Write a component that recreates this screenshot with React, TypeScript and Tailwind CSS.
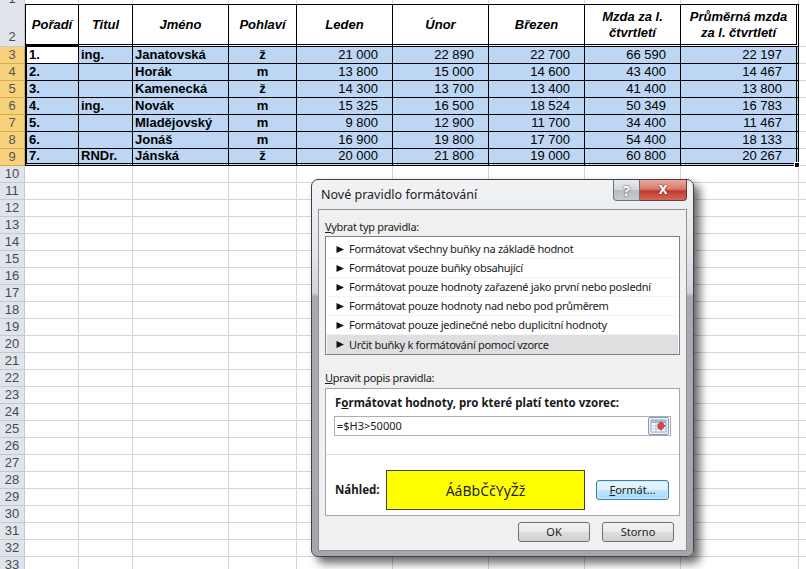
import React from 'react';

const COLS = [54, 54, 96, 68, 96, 96, 96, 96, 118];

const HEADERS: string[][] = [
  ['Pořadí'],
  ['Titul'],
  ['Jméno'],
  ['Pohlaví'],
  ['Leden'],
  ['Únor'],
  ['Březen'],
  ['Mzda za l.', 'čtvrtletí'],
  ['Průměrná mzda', 'za l. čtvrtletí'],
];

const DATA: string[][] = [
  ['1.', 'ing.', 'Janatovská', 'ž', '21 000', '22 890', '22 700', '66 590', '22 197'],
  ['2.', '', 'Horák', 'm', '13 800', '15 000', '14 600', '43 400', '14 467'],
  ['3.', '', 'Kamenecká', 'ž', '14 300', '13 700', '13 400', '41 400', '13 800'],
  ['4.', 'ing.', 'Novák', 'm', '15 325', '16 500', '18 524', '50 349', '16 783'],
  ['5.', '', 'Mladějovský', 'm', '9 800', '12 900', '11 700', '34 400', '11 467'],
  ['6.', '', 'Jonáš', 'm', '16 900', '19 800', '17 700', '54 400', '18 133'],
  ['7.', 'RNDr.', 'Jánská', 'ž', '20 000', '21 800', '19 000', '60 800', '20 267'],
];

const RULES = [
  'Formátovat všechny buňky na základě hodnot',
  'Formátovat pouze buňky obsahující',
  'Formátovat pouze hodnoty zařazené jako první nebo poslední',
  'Formátovat pouze hodnoty nad nebo pod průměrem',
  'Formátovat pouze jedinečné nebo duplicitní hodnoty',
  'Určit buňky k formátování pomocí vzorce',
];

const sheetFont = { fontFamily: '"Liberation Sans", Arial, sans-serif' };
const uiFont = { fontFamily: '"Noto Sans", "Open Sans", sans-serif' };

// row number cell on the left edge
const RowHead = ({ n, h, selected, bottom }: { n: string; h: string; selected?: boolean; bottom?: boolean }) => (
  <div
    className={`w-[25px] shrink-0 ${h} flex justify-center border-r border-b text-[13px] leading-[16px] ${
      bottom ? 'items-end pb-[1px]' : 'items-center'
    } ${
      selected
        ? 'bg-[#f6d27f] border-[#d9a94a] text-[#5d5440]'
        : 'bg-[#e1e5eb] border-[#c3c9d2] text-[#454b55]'
    }`}
  >
    {n}
  </div>
);

const TriangleIcon = () => (
  <svg width="9" height="9" viewBox="0 0 9 9" className="shrink-0">
    <polygon points="0.5,1 8,4.5 0.5,8" fill="#111" />
  </svg>
);

const RangeIcon = () => (
  <svg width="21" height="18" viewBox="0 0 21 18">
    <rect x="0.5" y="0.5" width="20" height="17" rx="1.5" fill="#eef3f9" stroke="#8a98ab" />
    <rect x="3" y="3" width="15" height="12" fill="#ffffff" stroke="#7f93b0" strokeWidth="0.8" />
    <rect x="3" y="3" width="15" height="3" fill="#9fb8d8" />
    <line x1="3" y1="9" x2="18" y2="9" stroke="#9fb4cf" strokeWidth="0.8" />
    <line x1="3" y1="12" x2="18" y2="12" stroke="#9fb4cf" strokeWidth="0.8" />
    <line x1="8" y1="3" x2="8" y2="15" stroke="#9fb4cf" strokeWidth="0.8" />
    <line x1="13" y1="3" x2="13" y2="15" stroke="#9fb4cf" strokeWidth="0.8" />
    <polygon points="10,7 14,5 17,9 13,13 10,11" fill="#e0404a" stroke="#a21e26" strokeWidth="0.7" />
  </svg>
);

const Dialog = () => (
  <div
    className="absolute left-[311px] top-[179px] w-[383px] h-[378px] flex flex-col rounded-[7px] border border-[#3e4146] px-[6px] pb-[5px] shadow-[6px_6px_10px_rgba(0,0,0,0.6)] bg-[linear-gradient(to_bottom,#f1f3f5_0%,#e2e5e9_20%,#d0d3d7_30%,#a7aaae_31%,#a4a7ab_100%)]"
    style={uiFont}
  >
    {/* title bar */}
    <div className="h-[29px] flex items-start justify-between">
      <span className="pt-[6px] pl-[3px] text-[12.5px] leading-[18px] text-[#1b1b1b]">Nové pravidlo formátování</span>
      <div className="flex">
        <div className="w-[27px] h-[21px] flex items-center justify-center rounded-bl-[4px] border border-t-0 border-[#6f7379] bg-[linear-gradient(to_bottom,#e9ebee_0%,#d2d5d9_50%,#b9bdc2_51%,#c7cace_100%)] text-white text-[14px] font-bold [text-shadow:0_0_2px_#2a2a2a]">
          ?
        </div>
        <div className="w-[47px] h-[21px] flex items-center justify-center rounded-br-[4px] border border-t-0 border-l-0 border-[#6d3a36] bg-[linear-gradient(to_bottom,#e9a99c_0%,#d47b6c_45%,#c0392b_55%,#d36a5c_100%)] text-white text-[13px] font-bold [text-shadow:0_0_2px_#5a1a14]">
          X
        </div>
      </div>
    </div>

    {/* client area */}
    <div className="flex-1 bg-[#f0f0f0] border border-[#8b9097] px-[6px] pt-[9px] text-[11px] text-[#1a1a1a]">
      <div className="leading-[16px] tracking-[-0.3px]">
        <span className="underline">V</span>ybrat typ pravidla:
      </div>
      <div className="mt-[1px] h-[119px] border border-[#7d838b] bg-white pt-[3px] px-[1px]">
        {RULES.map((r, i) => (
          <div
            key={r}
            className={`h-[19px] flex items-center gap-[4px] pl-[9px] leading-[16px] tracking-[-0.3px] ${
              i === RULES.length - 1 ? 'bg-[#dfdfe2]' : 'border-b border-[#f3f3f3]'
            }`}
          >
            <TriangleIcon />
            <span>{r}</span>
          </div>
        ))}
      </div>

      <div className="mt-[15px] leading-[16px] tracking-[-0.3px]">
        <span className="underline">U</span>pravit popis pravidla:
      </div>
      <div className="mt-[2px] h-[128px] border border-[#a3a6ab] bg-white pt-[6px]">
        <div className="pl-[9px] leading-[16px] font-bold text-[11.5px]">
          F<span className="underline">o</span>rmátovat hodnoty, pro které platí tento vzorec:
        </div>
        <div className="mt-[5px] mx-[8px] h-[20px] border border-[#abadb3] flex items-center justify-between pl-[2px] pr-[1px]">
          <span className="leading-[16px]">=$H3&gt;50000</span>
          <RangeIcon />
        </div>
        <div className="mt-[18px] h-px bg-[#dcdcdc]" />
        <div className="mt-[15px] h-[40px] flex items-center pl-[9px]">
          <span className="w-[51px] font-bold text-[11.5px] leading-[16px]">Náhled:</span>
          <div className="w-[199px] h-[40px] border border-[#3b3f4a] bg-[#ffff00] flex items-center justify-center text-[14px] text-[#222]">
            ÁáBbČčYyŽž
          </div>
          <button className="ml-[11px] w-[73px] h-[20px] rounded-[3px] border border-[#3c7fb1] bg-[linear-gradient(to_bottom,#eaf6fd_0%,#d9f0fc_50%,#bee6fd_51%,#a7d9f5_100%)] leading-[16px] shadow-[inset_0_0_0_1px_#cde9f9]">
            <span className="underline">F</span>ormát...
          </button>
        </div>
      </div>

      <div className="mt-[6px] flex justify-end gap-[12px] pr-[6px]">
        <button className="w-[72px] h-[20px] rounded-[3px] border border-[#707070] bg-[linear-gradient(to_bottom,#f2f2f2_0%,#ebebeb_50%,#dddddd_51%,#cfcfcf_100%)] leading-[16px]">
          OK
        </button>
        <button className="w-[72px] h-[20px] rounded-[3px] border border-[#707070] bg-[linear-gradient(to_bottom,#f2f2f2_0%,#ebebeb_50%,#dddddd_51%,#cfcfcf_100%)] leading-[16px]">
          Storno
        </button>
      </div>
    </div>
  </div>
);

export default function App() {
  const emptyRows = Array.from({ length: 24 }, (_, i) => i + 10);

  return (
    <div className="relative w-[806px] h-[569px] overflow-hidden bg-white text-black" style={sheetFont}>
      {/* row 1 (cut off at the top) */}
      <div className="flex h-[4px] overflow-hidden">
        <div className="w-[25px] shrink-0 h-[4px] bg-[#e1e5eb] border-r border-[#c3c9d2] flex items-end justify-center text-[13px] leading-[10px] text-[#454b55]">
          1
        </div>
        {COLS.map((w, i) => (
          <div key={i} className="shrink-0 h-[4px] border-r border-[#d6d6d6]" style={{ width: w }} />
        ))}
        <div className="flex-1" />
      </div>

      {/* row 2 – headers */}
      <div className="flex">
        <RowHead n="2" h="h-[43px]" bottom />
        {HEADERS.map((lines, i) => (
          <div
            key={i}
            className={`shrink-0 h-[43px] border-t border-b-[3px] border-double border-r border-t-black border-b-black border-r-black flex flex-col items-center justify-center text-[13px] leading-[16px] font-bold italic ${
              i === 0 ? 'border-l border-l-black border-solid' : ''
            } ${i === 8 ? 'border-r-[3px]' : ''}`}
            style={{ width: COLS[i] }}
          >
            {lines.map((l) => (
              <span key={l}>{l}</span>
            ))}
          </div>
        ))}
        <div className="flex-1 border-b border-[#d6d6d6]" />
      </div>

      {/* rows 3–9 – data */}
      {DATA.map((row, r) => {
        const last = r === DATA.length - 1;
        return (
          <div key={r} className="flex">
            <RowHead n={String(r + 3)} h="h-[17px]" selected />
            {row.map((v, c) => {
              const align =
                c <= 2 ? 'justify-start pl-[2px]' : c === 3 ? 'justify-center' : 'justify-end pr-[14px]';
              const weight = c <= 3 ? 'font-bold' : 'font-normal';
              const bg = r === 0 && c === 0 ? 'bg-white' : 'bg-[#bcd6f3]';
              return (
                <div
                  key={c}
                  className={`relative shrink-0 h-[17px] flex items-center border-r border-r-black ${
                    last ? 'border-b-[3px] border-double border-b-black' : 'border-b border-b-black'
                  } ${c === 0 ? 'border-l-2 border-l-black' : ''} ${c === 8 ? 'border-r-[3px] border-double' : ''} ${align} ${weight} ${bg} text-[13px] leading-[16px]`}
                  style={{ width: COLS[c] }}
                >
                  {v}
                  {last && c === 8 && (
                    <span className="absolute -right-[4px] -bottom-[5px] w-[6px] h-[6px] bg-black border border-white" />
                  )}
                </div>
              );
            })}
            <div className="flex-1 border-b border-[#d6d6d6]" />
          </div>
        );
      })}

      {/* rows 10+ – empty grid */}
      {emptyRows.map((n) => (
        <div key={n} className="flex">
          <RowHead n={String(n)} h="h-[17px]" />
          {COLS.map((w, i) => (
            <div key={i} className="shrink-0 h-[17px] border-r border-b border-[#d6d6d6]" style={{ width: w }} />
          ))}
          <div className="flex-1 border-b border-[#d6d6d6]" />
        </div>
      ))}

      <Dialog />
    </div>
  );
}
